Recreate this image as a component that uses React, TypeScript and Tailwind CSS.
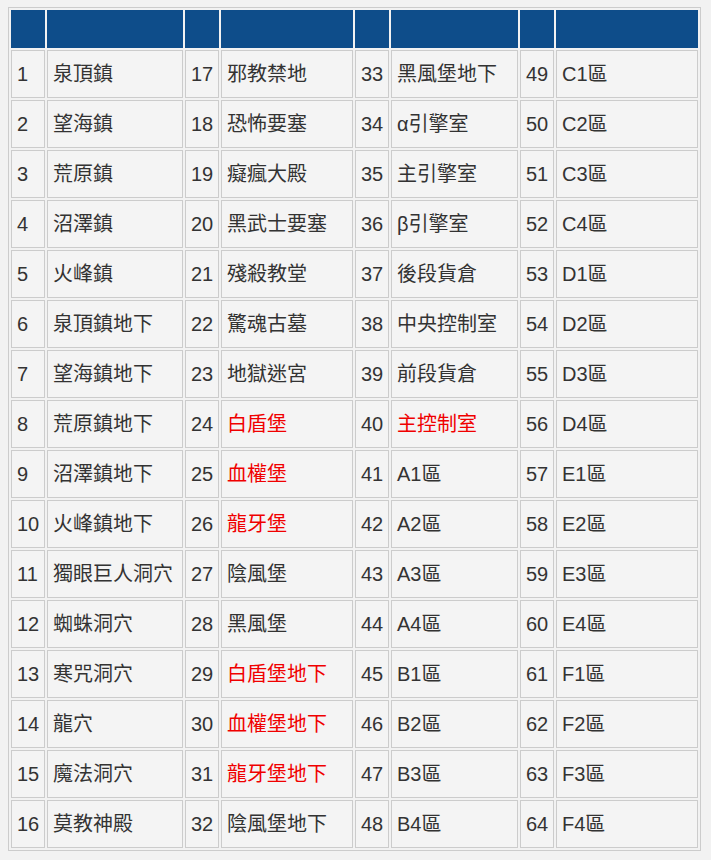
const col2 = ['泉頂鎮', '望海鎮', '荒原鎮', '沼澤鎮', '火峰鎮', '泉頂鎮地下', '望海鎮地下', '荒原鎮地下', '沼澤鎮地下', '火峰鎮地下', '獨眼巨人洞穴', '蜘蛛洞穴', '寒咒洞穴', '龍穴', '魔法洞穴', '莫教神殿'];
const col4 = ['邪教禁地', '恐怖要塞', '癡瘋大殿', '黑武士要塞', '殘殺教堂', '驚魂古墓', '地獄迷宮', '白盾堡', '血權堡', '龍牙堡', '陰風堡', '黑風堡', '白盾堡地下', '血權堡地下', '龍牙堡地下', '陰風堡地下'];
const col6 = ['黑風堡地下', 'α引擎室', '主引擎室', 'β引擎室', '後段貨倉', '中央控制室', '前段貨倉', '主控制室', 'A1區', 'A2區', 'A3區', 'A4區', 'B1區', 'B2區', 'B3區', 'B4區'];
const col8 = ['C1區', 'C2區', 'C3區', 'C4區', 'D1區', 'D2區', 'D3區', 'D4區', 'E1區', 'E2區', 'E3區', 'E4區', 'F1區', 'F2區', 'F3區', 'F4區'];

const red = new Set([24, 25, 26, 29, 30, 31, 40]);
const widths = ['w-[34px]', 'w-[136px]', 'w-[34px]', 'w-[132px]', 'w-[34px]', 'w-[127px]', 'w-[34px]', 'w-[142px]'];

const Cell = ({ children, isRed }: { children: React.ReactNode; isRed?: boolean }) => (
  <td
    className={`h-[48px] border border-[#cccccc] bg-[#f4f4f4] px-[5px] text-[20px] leading-none whitespace-nowrap ${
      isRed ? 'text-[#f00000]' : 'text-[#333333]'
    }`}
  >
    {children}
  </td>
);

export default function App() {
  return (
    <div className="min-h-[860px] bg-[#f2f2f2] pt-[7px] pl-[8px] font-['Liberation_Sans','Noto_Sans_CJK_TC',sans-serif]">
      <table className="w-[693px] table-fixed border-separate border-spacing-[2px] border border-[#cccccc]">
        <colgroup>
          {widths.map((w, i) => (
            <col key={i} className={w} />
          ))}
        </colgroup>
        <thead>
          <tr>
            {widths.map((_, i) => (
              <th key={i} className="h-[38px] border border-[#0e4d8a] bg-[#0e4d8a]" />
            ))}
          </tr>
        </thead>
        <tbody>
          {col2.map((name, i) => {
            const a = i + 1;
            const b = i + 17;
            const c = i + 33;
            const d = i + 49;
            return (
              <tr key={a}>
                <Cell>{a}</Cell>
                <Cell>{name}</Cell>
                <Cell>{b}</Cell>
                <Cell isRed={red.has(b)}>{col4[i]}</Cell>
                <Cell>{c}</Cell>
                <Cell isRed={red.has(c)}>{col6[i]}</Cell>
                <Cell>{d}</Cell>
                <Cell>{col8[i]}</Cell>
              </tr>
            );
          })}
        </tbody>
      </table>
    </div>
  );
}
